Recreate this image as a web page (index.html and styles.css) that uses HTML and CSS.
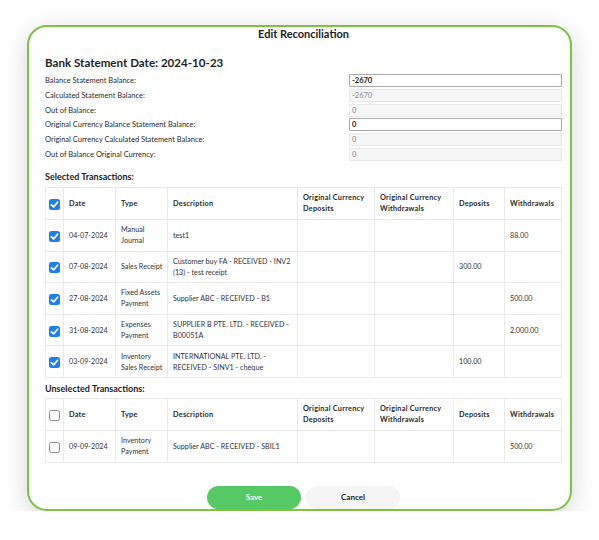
FILE: index.html
```html
<!DOCTYPE html>
<html lang="en">

<head>
    <meta charset="UTF-8">
    <meta name="viewport" content="width=device-width, initial-scale=1.0">
    <title>Edit Reconciliation</title>
    <link rel="stylesheet" href="styles.css">
</head>

<body>
    <div class="modal">
        <div class="title">Edit Reconciliation</div>

        <h2 class="heading">Bank Statement Date: 2024-10-23</h2>

        <div class="balances">
            <label>Balance Statement Balance:</label>
            <input class="edit" type="text" value="-2670">
            <label>Calculated Statement Balance:</label>
            <input type="text" value="-2670" readonly>
            <label>Out of Balance:</label>
            <input type="text" value="0" readonly>
            <label>Original Currency Balance Statement Balance:</label>
            <input class="edit" type="text" value="0">
            <label>Original Currency Calculated Statement Balance:</label>
            <input type="text" value="0" readonly>
            <label>Out of Balance Original Currency:</label>
            <input type="text" value="0" readonly>
        </div>

        <h3 class="section">Selected Transactions:</h3>
        <table class="trans">
            <colgroup>
                <col class="c-chk">
                <col class="c-date">
                <col class="c-type">
                <col class="c-desc">
                <col class="c-odep">
                <col class="c-owd">
                <col class="c-dep">
                <col>
            </colgroup>
            <thead>
                <tr>
                    <th class="chk"><span class="box on"></span></th>
                    <th>Date</th>
                    <th>Type</th>
                    <th>Description</th>
                    <th>Original Currency Deposits</th>
                    <th>Original Currency Withdrawals</th>
                    <th>Deposits</th>
                    <th>Withdrawals</th>
                </tr>
            </thead>
            <tbody>
                <tr>
                    <td class="chk"><span class="box on"></span></td>
                    <td>04-07-2024</td>
                    <td>Manual Journal</td>
                    <td>test1</td>
                    <td></td>
                    <td></td>
                    <td></td>
                    <td>88.00</td>
                </tr>
                <tr>
                    <td class="chk"><span class="box on"></span></td>
                    <td>07-08-2024</td>
                    <td>Sales Receipt</td>
                    <td>Customer buy FA - RECEIVED - INV2 (13) - test receipt</td>
                    <td></td>
                    <td></td>
                    <td>300.00</td>
                    <td></td>
                </tr>
                <tr>
                    <td class="chk"><span class="box on"></span></td>
                    <td>27-08-2024</td>
                    <td>Fixed Assets Payment</td>
                    <td>Supplier ABC - RECEIVED - B1</td>
                    <td></td>
                    <td></td>
                    <td></td>
                    <td>500.00</td>
                </tr>
                <tr>
                    <td class="chk"><span class="box on"></span></td>
                    <td>31-08-2024</td>
                    <td>Expenses Payment</td>
                    <td>SUPPLIER B PTE. LTD. - RECEIVED - B00051A</td>
                    <td></td>
                    <td></td>
                    <td></td>
                    <td>2,000.00</td>
                </tr>
                <tr>
                    <td class="chk"><span class="box on"></span></td>
                    <td>03-09-2024</td>
                    <td>Inventory Sales Receipt</td>
                    <td>INTERNATIONAL PTE. LTD. - RECEIVED - SINV1 - cheque</td>
                    <td></td>
                    <td></td>
                    <td>100.00</td>
                    <td></td>
                </tr>
            </tbody>
        </table>

        <h3 class="section second">Unselected Transactions:</h3>
        <table class="trans">
            <colgroup>
                <col class="c-chk">
                <col class="c-date">
                <col class="c-type">
                <col class="c-desc">
                <col class="c-odep">
                <col class="c-owd">
                <col class="c-dep">
                <col>
            </colgroup>
            <thead>
                <tr>
                    <th class="chk"><span class="box"></span></th>
                    <th>Date</th>
                    <th>Type</th>
                    <th>Description</th>
                    <th>Original Currency Deposits</th>
                    <th>Original Currency Withdrawals</th>
                    <th>Deposits</th>
                    <th>Withdrawals</th>
                </tr>
            </thead>
            <tbody>
                <tr>
                    <td class="chk"><span class="box"></span></td>
                    <td>09-09-2024</td>
                    <td>Inventory Payment</td>
                    <td>Supplier ABC - RECEIVED - SBIL1</td>
                    <td></td>
                    <td></td>
                    <td></td>
                    <td>500.00</td>
                </tr>
            </tbody>
        </table>

        <div class="actions">
            <button class="save">Save</button>
            <button class="cancel">Cancel</button>
        </div>
    </div>
</body>

</html>
```

FILE: styles.css
```css
* {
    box-sizing: border-box;
    font-family: Lato, "Open Sans", sans-serif;
}

body {
    margin: 0;
    background-color: white;
}

.modal {
    margin: 25px 0 0 27px;
    width: 545px;
    height: 486px;
    padding: 0 8px 0 16px;
    border: 2px solid #7dc243;
    border-radius: 20px;
    background-color: white;
    box-shadow: 0 6px 24px #0000002a;
    color: #222;
}

.title {
    text-align: center;
    font-size: 11px;
    font-weight: 700;
    line-height: 14px;
}

.heading {
    margin: 13px 0 2px 0;
    font-size: 11.6px;
    font-weight: 700;
    line-height: 18px;
    color: #1e1e1e;
}

.balances {
    display: grid;
    grid-template-columns: 304px 1fr;
    grid-auto-rows: 13px;
    row-gap: 1.8px;
    align-items: center;
}

.balances label {
    font-size: 7.5px;
    line-height: 13px;
    color: #2a2a2a;
}

.balances input {
    height: 13px;
    margin: 0;
    padding: 0 2px;
    font-size: 7.5px;
    color: #888;
    background-color: #f6f6f6;
    border: 1px solid #e8e8e8;
    border-radius: 1px;
    outline: none;
}

.balances input.edit {
    background-color: white;
    border: 1px solid #a8a8a8;
    color: #222;
    font-weight: 700;
}

.section {
    margin: 10px 0 4px 0;
    font-size: 9px;
    font-weight: 700;
    line-height: 12px;
}

.section.second {
    margin-top: 5px;
    margin-bottom: 3px;
}

.trans {
    width: 517px;
    table-layout: fixed;
    border-collapse: collapse;
    font-size: 7.2px;
    color: #333;
}

.c-chk { width: 18px; }
.c-date { width: 52px; }
.c-type { width: 52px; }
.c-desc { width: 130px; }
.c-odep { width: 77px; }
.c-owd { width: 79px; }
.c-dep { width: 51px; }

.trans th,
.trans td {
    border: 1px solid #e9e9e9;
    padding: 0 4px 0 5px;
    height: 31.6px;
    text-align: left;
    vertical-align: middle;
    line-height: 11px;
}

.trans th {
    height: 32px;
    font-size: 7.3px;
    font-weight: 700;
    letter-spacing: 0.25px;
    color: #2a2a2a;
}

.trans .chk {
    padding: 0;
    text-align: center;
}

.box {
    display: inline-block;
    width: 11px;
    height: 11px;
    margin-top: 2px;
    border: 1px solid #8a8a8a;
    border-radius: 2.5px;
    background-color: white;
    vertical-align: middle;
}

.box.on {
    border: none;
    background-color: #1b7ff2;
    background-image: url("data:image/svg+xml,%3Csvg xmlns='http://www.w3.org/2000/svg' viewBox='0 0 12 12'%3E%3Cpath d='M2.6 6.3 L5 8.6 L9.4 3.5' fill='none' stroke='white' stroke-width='1.9' stroke-linecap='round' stroke-linejoin='round'/%3E%3C/svg%3E");
    background-size: 100% 100%;
}

.actions {
    display: flex;
    justify-content: center;
    gap: 5px;
    margin-top: 23px;
}

.actions button {
    width: 94px;
    height: 23px;
    border: none;
    border-radius: 12px;
    font-size: 8px;
    font-weight: 700;
    cursor: pointer;
}

.save {
    background-color: #55c964;
    color: white;
}

.cancel {
    background-color: #f5f5f5;
    color: #222;
}
```
